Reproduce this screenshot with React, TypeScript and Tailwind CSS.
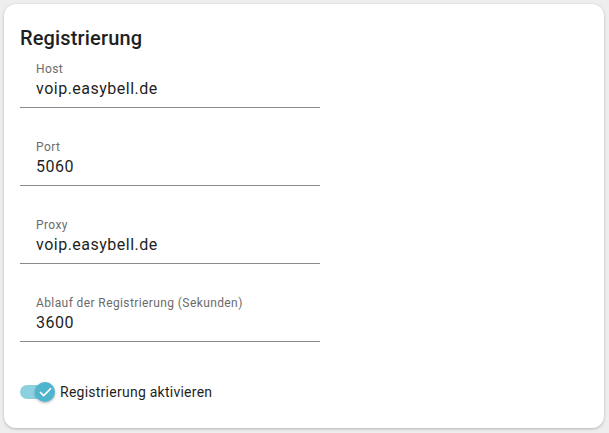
import { Check } from 'lucide-react'

type FieldProps = { label: string; value: string }

const Field = ({ label, value }: FieldProps) => (
  <div className="flex h-[56px] w-[300px] flex-col border-b border-[#8a8a8a] px-4 pt-[10px]">
    <span className="text-[12px] leading-[15px] tracking-[0.4px] text-[#6b6b6b]">{label}</span>
    <span className="text-[16px] leading-[24px] tracking-[0.5px] text-[#1f1f1f]">{value}</span>
  </div>
)

const fields: FieldProps[] = [
  { label: 'Host', value: 'voip.easybell.de' },
  { label: 'Port', value: '5060' },
  { label: 'Proxy', value: 'voip.easybell.de' },
  { label: 'Ablauf der Registrierung (Sekunden)', value: '3600' },
]

export default function App() {
  return (
    <main className="h-[433px] w-[609px] bg-[#eeeeee] p-1 font-['Roboto',sans-serif]">
      <div className="flex h-[424px] w-[600px] flex-col rounded-xl bg-white px-4 pt-5 shadow-[0_1px_3px_rgba(0,0,0,0.25)]">
        <h2 className="text-[20px] font-medium leading-[28px] tracking-[0.15px] text-[#1f1f1f]">Registrierung</h2>

        <div className="flex flex-col gap-[22px]">
          {fields.map((f) => (
            <Field key={f.label} label={f.label} value={f.value} />
          ))}
        </div>

        <div className="mt-[40px] flex items-center">
          <div className="relative h-[20px] w-[40px]">
            <div className="absolute left-0 top-[3px] h-[14px] w-[30px] rounded-full bg-[#8dd0e0]" />
            <div className="absolute left-[15px] top-0 flex h-[20px] w-[20px] items-center justify-center rounded-full bg-[#4fb5ce] shadow-[0_1px_3px_rgba(0,0,0,0.3)]">
              <Check size={15} strokeWidth={2.75} color="white" />
            </div>
          </div>
          <span className="text-[14px] leading-[20px] tracking-[0.25px] text-[#1f1f1f]">Registrierung aktivieren</span>
        </div>
      </div>
    </main>
  )
}
